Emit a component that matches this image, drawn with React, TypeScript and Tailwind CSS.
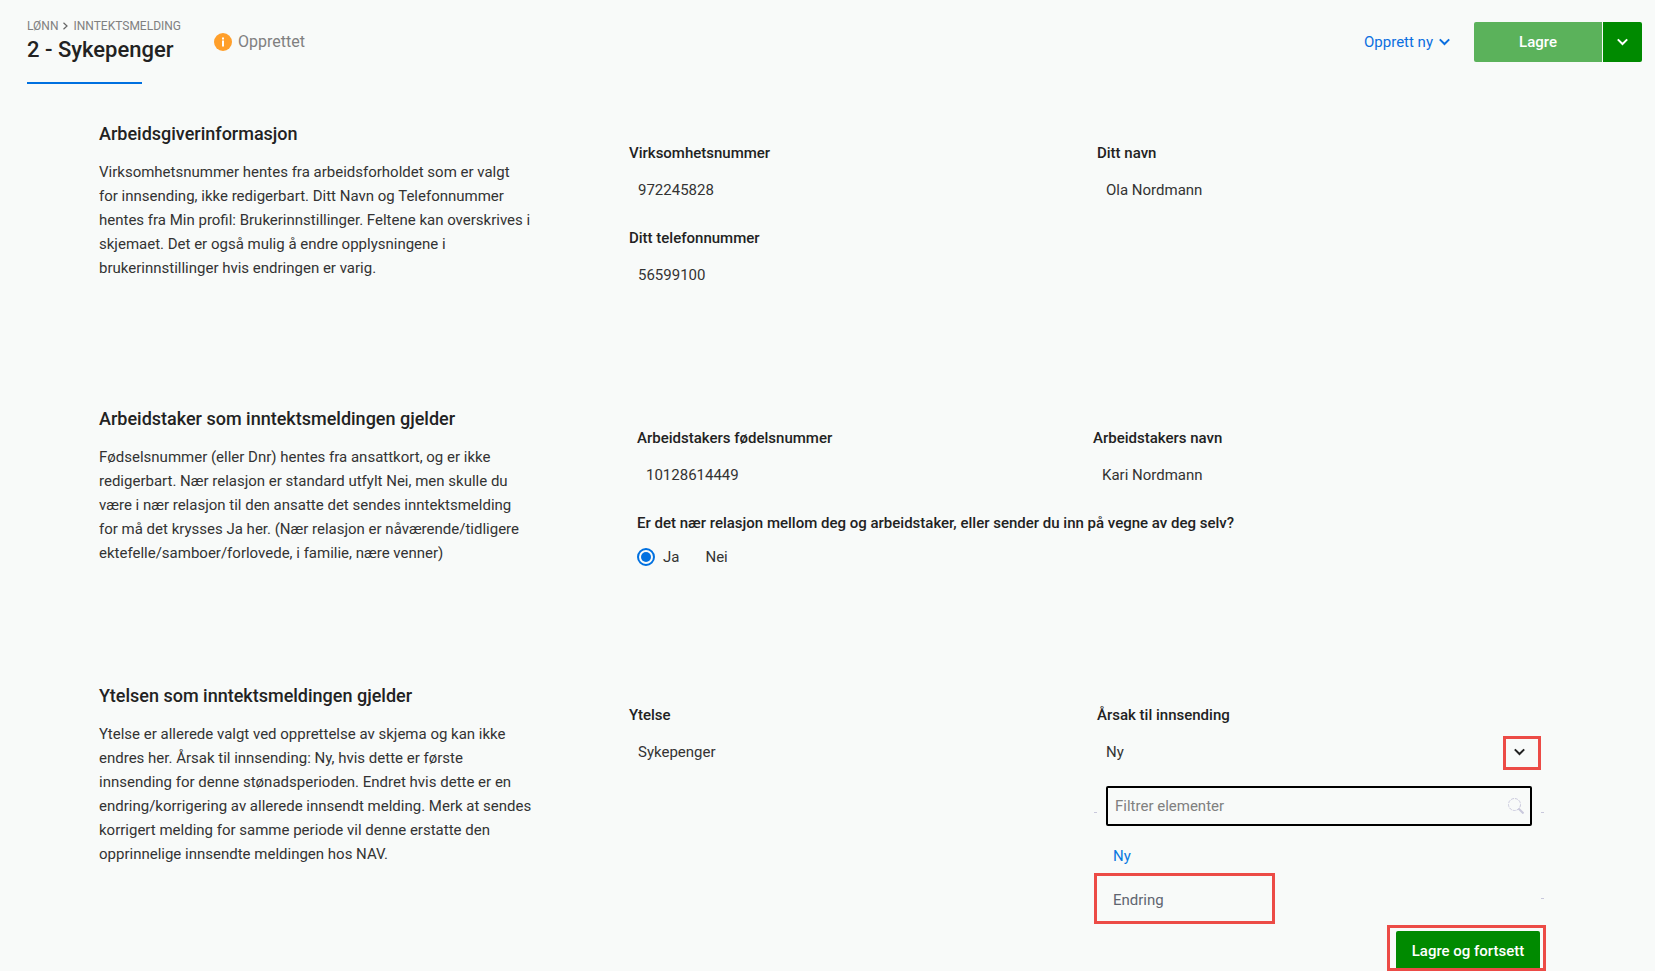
import React, { useState } from 'react';
import { clsx } from 'clsx';

const ARSAKER = ['Ny', 'Endring'];

const Chevron = ({ className }: { className?: string }) => (
    <svg viewBox="0 0 11 8" fill="none" stroke="currentColor" strokeWidth="2" className={clsx('h-2 w-[11px]', className)} aria-hidden="true">
        <path d="M0.8 1.4 5.5 6 10.2 1.4" />
    </svg>
);

// Red frame laid over the control it points out
const Marker = ({ className }: { className: string }) => (
    <span className={clsx('pointer-events-none absolute border-3 border-[#ec4b46]', className)} />
);

type SectionProps = {
    title: string;
    text: string;
    children: React.ReactNode;
};

const Section = ({ title, text, children }: SectionProps) => (
    <section className="flex gap-[90px]">
        <div className="w-[440px] shrink-0">
            <h2 className="text-lg leading-6 font-medium">{title}</h2>
            <p className="mt-[14px] text-[15px] leading-6 whitespace-pre-line text-[#333]">{text}</p>
        </div>
        <div className="min-w-0 flex-1 pt-[21px]">{children}</div>
    </section>
);

type FieldProps = {
    id: string;
    label: string;
    value: string;
};

const Field = ({ id, label, value }: FieldProps) => (
    <div className="flex flex-col gap-2">
        <label htmlFor={id} className="text-[15px] leading-5 font-medium">{label}</label>
        <input id={id} readOnly value={value} className="h-[38px] w-full px-[9px] text-[15px] text-[#333] outline-none" />
    </div>
);

const Header = () => (
    <header className="flex h-[84px] items-start justify-between pr-[13px] pl-[27px]">
        <div className="flex">
            <div className="flex flex-col">
                <nav className="mt-[18px] flex h-4 items-center gap-1 text-xs text-[#808080]">
                    <a href="#lonn">LØNN</a>
                    <svg viewBox="0 0 7 8" fill="none" stroke="#666" strokeWidth="1.2" className="h-2 w-[7px]" aria-hidden="true">
                        <path d="M1.5 0.8 5 4 1.5 7.2" />
                    </svg>
                    <a href="#inntektsmelding">INNTEKTSMELDING</a>
                </nav>
                <h1 className="mt-[2px] text-[22px] leading-7 font-medium">2 - Sykepenger</h1>
                <div className="mt-[18px] h-[2px] w-[115px] bg-[#0070e0]" />
            </div>
            <div className="ml-[33px] flex h-[84px] items-center gap-[6px] text-base text-[#808080]">
                <svg viewBox="0 0 18 18" className="size-[18px]" aria-hidden="true">
                    <circle cx="9" cy="9" r="9" fill="#ff9f2b" />
                    <path d="M8 4.5h2v2H8zM8 7.5h2v6H8z" fill="#fff" />
                </svg>
                Opprettet
            </div>
        </div>
        <div className="flex h-[84px] items-center gap-6">
            <button type="button" className="flex items-center gap-[6px] text-[15px] text-[#0b6fe0]">
                Opprett ny
                <Chevron />
            </button>
            <div className="flex h-10 gap-px overflow-hidden rounded-xs text-[15px] font-medium text-white">
                <button type="button" className="w-32 bg-[#5bb25b]">Lagre</button>
                <button type="button" aria-label="Flere valg" className="flex w-[39px] items-center justify-center bg-[#008a00]">
                    <Chevron />
                </button>
            </div>
        </div>
    </header>
);

const App: React.FC = () => {
    const [relasjon, setRelasjon] = useState('ja');
    const [arsak, setArsak] = useState('Ny');
    const [filter, setFilter] = useState('');

    const treff = ARSAKER.filter((a) => a.toLowerCase().includes(filter.toLowerCase()));

    return (
        <div className="min-h-screen bg-[#f8faf9] font-['Roboto',sans-serif] text-[#222]">
            <Header />

            <main className="flex flex-col gap-[113px] pt-[38px] pr-[114px] pl-[99px]">
                <Section
                    title="Arbeidsgiverinformasjon"
                    text={`Virksomhetsnummer hentes fra arbeidsforholdet som er valgt
for innsending, ikke redigerbart. Ditt Navn og Telefonnummer
hentes fra Min profil: Brukerinnstillinger. Feltene kan overskrives i
skjemaet. Det er også mulig å endre opplysningene i
brukerinnstillinger hvis endringen er varig.`}
                >
                    <div className="grid grid-cols-2 gap-x-6 gap-y-[19px]">
                        <Field id="virksomhet" label="Virksomhetsnummer" value="972245828" />
                        <Field id="navn" label="Ditt navn" value="Ola Nordmann" />
                        <Field id="telefon" label="Ditt telefonnummer" value="56599100" />
                    </div>
                </Section>

                <Section
                    title="Arbeidstaker som inntektsmeldingen gjelder"
                    text={`Fødselsnummer (eller Dnr) hentes fra ansattkort, og er ikke
redigerbart. Nær relasjon er standard utfylt Nei, men skulle du
være i nær relasjon til den ansatte det sendes inntektsmelding
for må det krysses Ja her. (Nær relasjon er nåværende/tidligere
ektefelle/samboer/forlovede, i familie, nære venner)`}
                >
                    <div className="grid grid-cols-2 gap-x-4 gap-y-[19px] px-2">
                        <Field id="fnr" label="Arbeidstakers fødelsnummer" value="10128614449" />
                        <Field id="arbeidstaker" label="Arbeidstakers navn" value="Kari Nordmann" />
                        <fieldset className="col-span-2">
                            <legend className="text-[15px] leading-5 font-medium">
                                Er det nær relasjon mellom deg og arbeidstaker, eller sender du inn på vegne av deg selv?
                            </legend>
                            <div className="mt-[10px] flex h-7 items-center gap-[26px] text-[15px] text-[#333]">
                                {['Ja', 'Nei'].map((svar) => {
                                    const valgt = relasjon === svar.toLowerCase();
                                    return (
                                        <label key={svar} className="flex items-center gap-2">
                                            <input
                                                type="radio"
                                                name="relasjon"
                                                checked={valgt}
                                                onChange={() => setRelasjon(svar.toLowerCase())}
                                                className={clsx(
                                                    'appearance-none rounded-full',
                                                    valgt ? 'size-[18px] border-2 border-[#0070e0] bg-[#0070e0] bg-clip-content p-[2px]' : 'sr-only'
                                                )}
                                            />
                                            {svar}
                                        </label>
                                    );
                                })}
                            </div>
                        </fieldset>
                    </div>
                </Section>

                <Section
                    title="Ytelsen som inntektsmeldingen gjelder"
                    text={`Ytelse er allerede valgt ved opprettelse av skjema og kan ikke
endres her. Årsak til innsending: Ny, hvis dette er første
innsending for denne stønadsperioden. Endret hvis dette er en
endring/korrigering av allerede innsendt melding. Merk at sendes
korrigert melding for samme periode vil denne erstatte den
opprinnelige innsendte meldingen hos NAV.`}
                >
                    <div className="grid grid-cols-2 items-start gap-x-6">
                        <Field id="ytelse" label="Ytelse" value="Sykepenger" />
                        <div className="flex flex-col">
                            <label htmlFor="arsak" className="text-[15px] leading-5 font-medium">Årsak til innsending</label>
                            <div className="relative mt-2">
                                <select
                                    id="arsak"
                                    value={arsak}
                                    onChange={(e) => setArsak(e.target.value)}
                                    className="h-[38px] w-full appearance-none px-[9px] text-[15px] text-[#333] outline-none"
                                >
                                    {ARSAKER.map((a) => (
                                        <option key={a}>{a}</option>
                                    ))}
                                </select>
                                <Chevron className="pointer-events-none absolute top-[15px] right-4" />
                                <Marker className="top-[3px] right-0 h-[34px] w-[38px]" />
                            </div>

                            {/* Nedtrekksliste */}
                            <div className="relative mt-[15px] px-[9px]">
                                <input
                                    type="text"
                                    aria-label="Filtrer elementer"
                                    placeholder="Filtrer elementer"
                                    value={filter}
                                    onChange={(e) => setFilter(e.target.value)}
                                    className="h-10 w-full rounded-xs border-2 border-black px-[7px] text-[15px] outline-none placeholder:text-[#808080]"
                                />
                                <svg viewBox="0 0 16 16" fill="none" stroke="#c9c8dc" className="absolute top-3 right-[17px] size-4" aria-hidden="true">
                                    <circle cx="6.5" cy="6.5" r="6" strokeDasharray="3 1" />
                                    <path d="M10.5 10.5 15.5 15.5" strokeWidth="2" />
                                </svg>
                                <span className="absolute top-[26px] -left-[3px] h-px w-[3px] bg-[#c9c8dc]" />
                                <span className="absolute top-[26px] -right-[3px] h-px w-[3px] bg-[#c9c8dc]" />
                            </div>
                            <div className="relative mt-2">
                                <ul>
                                    {treff.map((a) => (
                                        <li key={a} className="relative">
                                            <button
                                                type="button"
                                                onClick={() => setArsak(a)}
                                                className={clsx('h-11 w-full px-4 text-left text-[15px]', a === arsak ? 'text-[#0a78e0]' : 'text-[#5f6570]')}
                                            >
                                                {a}
                                            </button>
                                            {a === 'Endring' && <Marker className="-top-[5px] -left-[3px] h-[51px] w-[181px]" />}
                                        </li>
                                    ))}
                                </ul>
                                <span className="absolute top-16 -right-[3px] h-px w-[3px] bg-[#c9c8dc]" />
                            </div>
                        </div>
                    </div>
                </Section>
            </main>

            <footer className="mt-[9px] flex justify-end pr-[115px]">
                <div className="relative">
                    <button type="button" className="h-10 w-36 rounded-t-xs bg-[#008a00] text-[15px] font-medium text-white">
                        Lagre og fortsett
                    </button>
                    <Marker className="-top-[6px] -right-[6px] bottom-0 -left-[9px]" />
                </div>
            </footer>
        </div>
    );
};

export default App;
